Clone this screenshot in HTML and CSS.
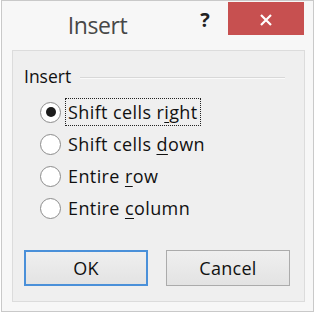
FILE: index.html
```html
<!DOCTYPE html>
<html lang="en">
<head>
    <meta charset="UTF-8">
    <meta name="viewport" content="width=device-width, initial-scale=1.0">
    <title>Insert</title>
    <link rel="stylesheet" href="styles.css">
</head>
<body>
    <div class="dialog">
        <div class="titlebar">
            <span class="title">Insert</span>
            <span class="help">?</span>
            <button class="close" aria-label="Close">
                <svg width="12" height="12" viewBox="0 0 12 12">
                    <path d="M1 1 L11 11 M11 1 L1 11" stroke="#fff" stroke-width="2.2" fill="none"/>
                </svg>
            </button>
        </div>
        <div class="panel">
            <div class="group-head">
                <span>Insert</span>
                <span class="rule"></span>
            </div>
            <div class="options">
                <label class="option">
                    <span class="radio checked"></span>
                    <span class="option-text focused">Shift cells r<u>i</u>ght</span>
                </label>
                <label class="option">
                    <span class="radio"></span>
                    <span class="option-text">Shift cells <u>d</u>own</span>
                </label>
                <label class="option">
                    <span class="radio"></span>
                    <span class="option-text">Entire <u>r</u>ow</span>
                </label>
                <label class="option">
                    <span class="radio"></span>
                    <span class="option-text">Entire <u>c</u>olumn</span>
                </label>
            </div>
            <div class="buttons">
                <button class="btn default">OK</button>
                <button class="btn">Cancel</button>
            </div>
        </div>
    </div>
</body>
</html>
```

FILE: styles.css
```css
*{
    box-sizing: border-box;
}

body{
    margin:0;
    padding:0;
    background: #fff;
    font-family: "Open Sans", "DejaVu Sans", sans-serif;
}

.dialog{
    width:313px;
    height:312px;
    margin-left:1px;
    border:1px solid #c9c9c9;
    background: #f7f7f7;
}

.titlebar{
    display: flex;
    align-items: flex-start;
    height:49px;
}

.title{
    width:191px;
    text-align: center;
    font-size: 23px;
    line-height: 28px;
    margin-top:10px;
    color:#474747;
    letter-spacing: -0.4px;
}

.help{
    width:24px;
    text-align: center;
    font-size: 20px;
    font-weight: bold;
    line-height: 24px;
    margin-top:7px;
    color:#222;
}

.close{
    width:76px;
    height:33px;
    margin-top:1px;
    margin-left:11px;
    border:none;
    padding:0;
    background: #c75050;
    display: flex;
    align-items: center;
    justify-content: center;
    padding-top:3px;
}

.panel{
    width:293px;
    height:252px;
    margin-left:10px;
    border:1px solid #dcdcdc;
    background: #efefef;
    padding:14px 11px 0 11px;
    display: flex;
    flex-direction: column;
}

.group-head{
    display: flex;
    align-items: center;
    font-size: 17.5px;
    line-height: 22px;
    color:#111;
}

.rule{
    flex:1;
    height:1px;
    margin:2px 8px 0 9px;
    background: #d8d8d8;
    box-shadow: 0 1px 0 #fafafa;
}

.options{
    display: flex;
    flex-direction: column;
    margin-top:9px;
    padding-left:16px;
}

.option{
    display: flex;
    align-items: center;
    height:32px;
    font-size: 18px;
    line-height: 22px;
    color:#111;
}

.radio{
    width:21px;
    height:21px;
    border-radius: 50%;
    border:1.5px solid #8c8c8c;
    background: #fff;
    margin-right:7px;
    display: flex;
    align-items: center;
    justify-content: center;
}

.radio.checked::after{
    content:"";
    width:10px;
    height:10px;
    border-radius: 50%;
    background: #1c1c1c;
}

.option-text{
    padding:2px 2px;
    border:1px solid transparent;
    margin-left:-3px;
    letter-spacing: 0.4px;
}

.option-text.focused{
    border:1px dotted #222;
}

.option-text u{
    text-underline-offset: 3px;
}

.buttons{
    display: flex;
    gap:18px;
    margin-top:26px;
}

.btn{
    width:124px;
    height:36px;
    font-family: "Open Sans", "DejaVu Sans", sans-serif;
    font-size: 18px;
    letter-spacing: 0.3px;
    color:#111;
    border:1px solid #ababab;
    background: linear-gradient(#efefef, #e3e3e3);
    padding:0;
}

.btn.default{
    border:2px solid #4a90d9;
}
```
